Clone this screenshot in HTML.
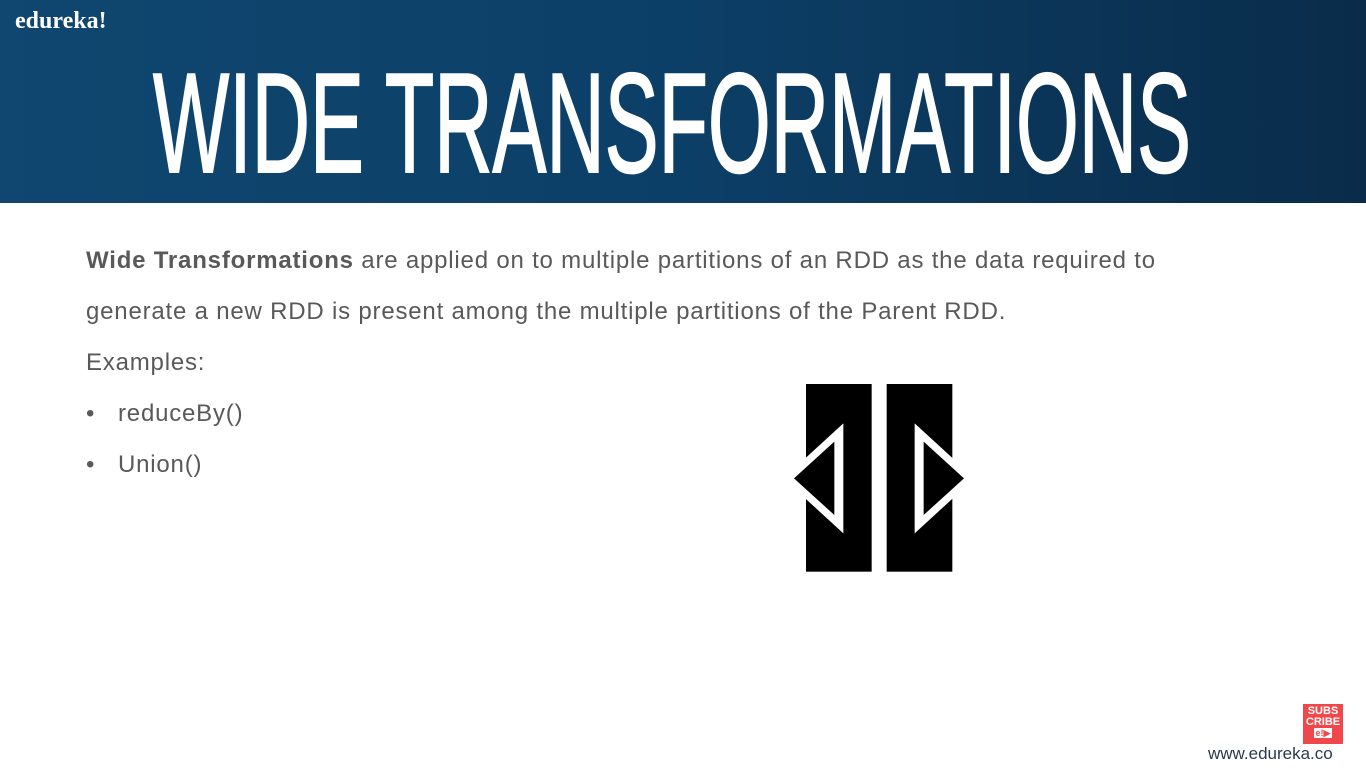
<!DOCTYPE html>
<html><head><meta charset="utf-8"><style>
html,body{margin:0;padding:0;width:1366px;height:768px;overflow:hidden;background:#fff;position:relative;font-family:"Liberation Sans",sans-serif}
.hdr{position:absolute;left:0;top:0;width:1366px;height:203px;background:linear-gradient(90deg,#0f4770 0%,#0c3f67 50%,#0a2c4a 100%)}
.logo{position:absolute;left:15px;top:8px;color:#fff;font-family:"Liberation Serif",serif;font-weight:bold;font-size:24px}
.t{position:absolute;left:86px;color:#595959;font-size:24px;letter-spacing:0.8px;white-space:nowrap}
.sub{position:absolute;left:1303px;top:704px;width:40px;height:40px;background:#f0484a;color:#fff;font-weight:bold;font-size:11px;line-height:11px;text-align:center;padding-top:2px;box-sizing:border-box}
.url{position:absolute;left:1208px;top:744px;color:#2a3a4a;font-size:17px}
</style></head><body>
<div class="hdr"></div>
<div class="logo">edureka!</div>
<svg style="position:absolute;left:0;top:0" width="1366" height="203">
<text x="153" y="172" fill="#fff" stroke="#fff" stroke-width="2" font-family="Liberation Sans Narrow, Liberation Sans, sans-serif" font-size="142" textLength="1038" lengthAdjust="spacingAndGlyphs">WIDE TRANSFORMATIONS</text>
</svg>
<div class="t" style="top:247px"><b>Wide Transformations</b> are applied on to multiple partitions of an RDD as the data required to</div>
<div class="t" style="top:298px">generate a new RDD is present among the multiple partitions of the Parent RDD.</div>
<div class="t" style="top:349px">Examples:</div>
<div class="t" style="top:400px">•</div><div class="t" style="top:400px;left:118px">reduceBy()</div>
<div class="t" style="top:451px">•</div><div class="t" style="top:451px;left:118px">Union()</div>
<svg style="position:absolute;left:780px;top:370px" width="200" height="220" viewBox="0 0 600 660">
<rect x="78" y="42" width="197" height="563" fill="#000"/>
<rect x="320" y="42" width="197" height="563" fill="#000"/>
<polygon points="10,325 190,160 190,490" fill="#fff"/>
<polygon points="42,325 163,215 163,435" fill="#000"/>
<polygon points="584,325 404,160 404,490" fill="#fff"/>
<polygon points="552,325 431,215 431,435" fill="#000"/>
</svg>
<div class="sub">SUBS<br>CRIBE<br><span style="background:#fff;color:#f0484a;padding:0 2px;font-size:9px">e!▶</span></div>
<div class="url">www.edureka.co</div>
</body></html>
